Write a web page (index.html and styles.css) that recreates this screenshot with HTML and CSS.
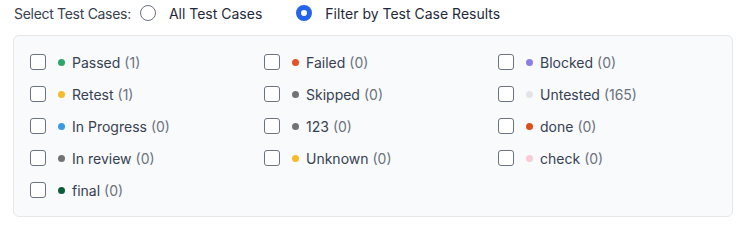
FILE: index.html
```html
<!DOCTYPE html>
<html>
<head>
<meta charset="utf-8">
<link rel="stylesheet" href="styles.css">
</head>
<body>
<div class="wrap">
  <div class="header">
    <span class="title">Select Test Cases:</span>
    <label class="opt"><span class="radio"></span><span>All Test Cases</span></label>
    <label class="opt opt-on"><span class="radio radio-on"></span><span>Filter by Test Case Results</span></label>
  </div>
  <div class="panel">
    <div class="item"><span class="cb"></span><span class="dot" style="background:#2aa86a"></span><span class="name">Passed</span><span class="count">(1)</span></div>
    <div class="item"><span class="cb"></span><span class="dot" style="background:#e2522b"></span><span class="name">Failed</span><span class="count">(0)</span></div>
    <div class="item"><span class="cb"></span><span class="dot" style="background:#8b7fe3"></span><span class="name">Blocked</span><span class="count">(0)</span></div>
    <div class="item"><span class="cb"></span><span class="dot" style="background:#f6bb2c"></span><span class="name">Retest</span><span class="count">(1)</span></div>
    <div class="item"><span class="cb"></span><span class="dot" style="background:#737373"></span><span class="name">Skipped</span><span class="count">(0)</span></div>
    <div class="item"><span class="cb"></span><span class="dot" style="background:#e3e4e6"></span><span class="name">Untested</span><span class="count">(165)</span></div>
    <div class="item"><span class="cb"></span><span class="dot" style="background:#3a9be3"></span><span class="name">In Progress</span><span class="count">(0)</span></div>
    <div class="item"><span class="cb"></span><span class="dot" style="background:#737373"></span><span class="name">123</span><span class="count">(0)</span></div>
    <div class="item"><span class="cb"></span><span class="dot" style="background:#da4f1d"></span><span class="name">done</span><span class="count">(0)</span></div>
    <div class="item"><span class="cb"></span><span class="dot" style="background:#737373"></span><span class="name">In review</span><span class="count">(0)</span></div>
    <div class="item"><span class="cb"></span><span class="dot" style="background:#f6bb2c"></span><span class="name">Unknown</span><span class="count">(0)</span></div>
    <div class="item"><span class="cb"></span><span class="dot" style="background:#f8cbd6"></span><span class="name">check</span><span class="count">(0)</span></div>
    <div class="item"><span class="cb"></span><span class="dot" style="background:#0d5d3d"></span><span class="name">final</span><span class="count">(0)</span></div>
  </div>
</div>
</body>
</html>
```
FILE: styles.css
```css
* { box-sizing: border-box; }
body {
  margin: 0;
  background: #ffffff;
  font-family: Inter, "Noto Sans", sans-serif;
  color: #374151;
}
.wrap {
  padding: 4px 17px 0 13px;
}
.header {
  display: flex;
  align-items: center;
  height: 18px;
  font-size: 14px;
  color: #374151;
  padding-left: 1px;
}
.title { margin-right: 9px; letter-spacing: -0.3px; }
.opt {
  display: flex;
  align-items: center;
  gap: 13px;
  margin-right: 34px;
  color: #1f2937;
}
.radio {
  width: 16px;
  height: 16px;
  border: 1px solid #6b7280;
  border-radius: 50%;
  background: #fff;
}
.radio-on {
  border: 5px solid #2563eb;
}
.panel {
  margin-top: 13px;
  border: 1px solid #e5e7eb;
  border-radius: 6px;
  background: #f9fafb;
  padding: 16px;
  display: grid;
  grid-template-columns: repeat(3, 1fr);
  column-gap: 16px;
  row-gap: 12px;
}
.item {
  display: flex;
  align-items: center;
  height: 20px;
  font-size: 14px;
}
.cb {
  width: 16px;
  height: 16px;
  border: 1px solid #6b7280;
  border-radius: 3px;
  background: #fff;
  margin-right: 12px;
}
.dot {
  width: 7px;
  height: 7px;
  border-radius: 50%;
  margin-right: 7px;
}
.name {
  color: #374151;
  margin-right: 4px;
}
.count { color: #6b7280; }
```
